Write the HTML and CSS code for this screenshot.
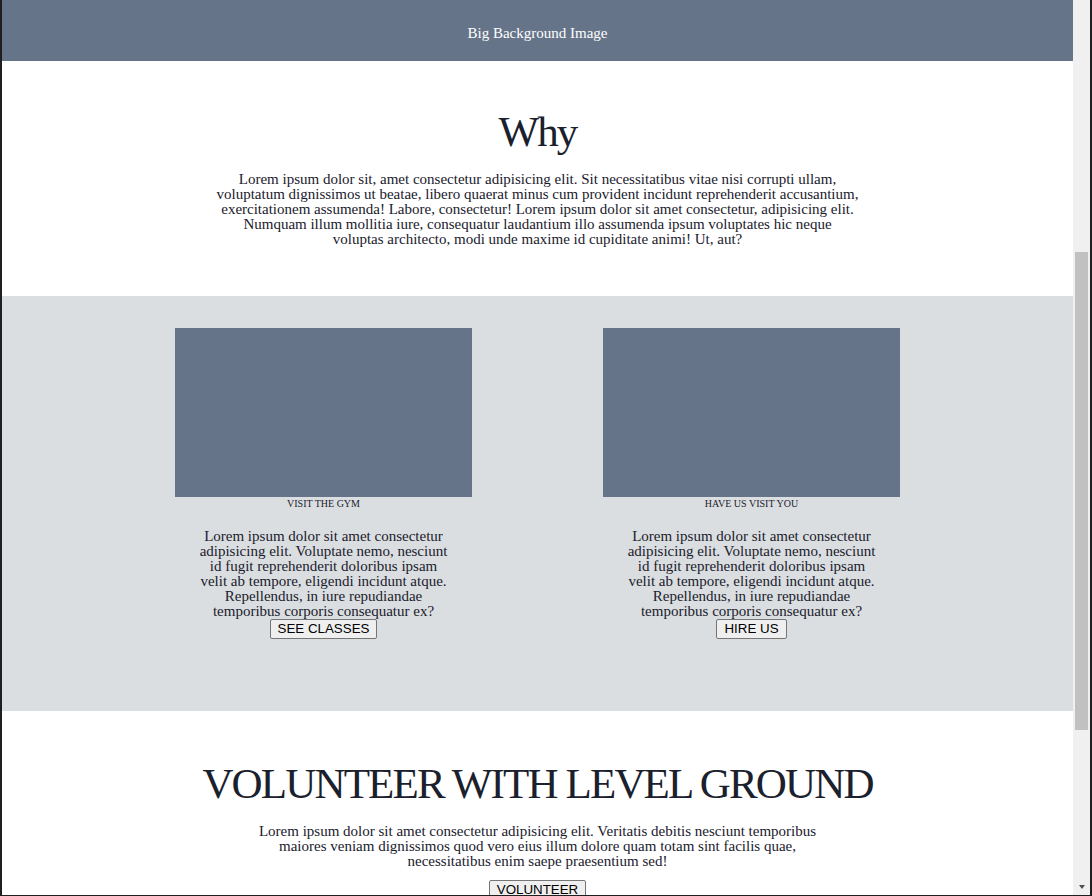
FILE: index.html
```html
<!DOCTYPE html>
<html lang="en">
<head>
<meta charset="utf-8">
<title>Level Ground</title>
<link rel="stylesheet" href="styles.css">
</head>
<body>
<div class="window">
  <div class="edge"></div>
  <div class="viewport">
    <header class="hero">Big Background Image</header>
    <section class="why">
      <h1 class="title">Why</h1>
      <p class="text why-text">Lorem ipsum dolor sit, amet consectetur adipisicing elit. Sit necessitatibus vitae nisi corrupti ullam, voluptatum dignissimos ut beatae, libero quaerat minus cum provident incidunt reprehenderit accusantium, exercitationem assumenda! Labore, consectetur! Lorem ipsum dolor sit amet consectetur, adipisicing elit. Numquam illum mollitia iure, consequatur laudantium illo assumenda ipsum voluptates hic neque voluptas architecto, modi unde maxime id cupiditate animi! Ut, aut?</p>
    </section>
    <section class="options">
      <div class="card">
        <div class="card-img"></div>
        <div class="caption">VISIT THE GYM</div>
        <p class="text card-text">Lorem ipsum dolor sit amet consectetur adipisicing elit. Voluptate nemo, nesciunt id fugit reprehenderit doloribus ipsam velit ab tempore, eligendi incidunt atque. Repellendus, in iure repudiandae temporibus corporis consequatur ex?</p>
        <button class="btn">SEE CLASSES</button>
      </div>
      <div class="card">
        <div class="card-img"></div>
        <div class="caption">HAVE US VISIT YOU</div>
        <p class="text card-text">Lorem ipsum dolor sit amet consectetur adipisicing elit. Voluptate nemo, nesciunt id fugit reprehenderit doloribus ipsam velit ab tempore, eligendi incidunt atque. Repellendus, in iure repudiandae temporibus corporis consequatur ex?</p>
        <button class="btn">HIRE US</button>
      </div>
    </section>
    <section class="volunteer">
      <h1 class="title">VOLUNTEER WITH LEVEL GROUND</h1>
      <p class="text vol-text">Lorem ipsum dolor sit amet consectetur adipisicing elit. Veritatis debitis nesciunt temporibus maiores veniam dignissimos quod vero eius illum dolore quam totam sint facilis quae, necessitatibus enim saepe praesentium sed!</p>
      <button class="btn">VOLUNTEER</button>
    </section>
  </div>
  <div class="scrollbar">
    <div class="thumb"></div>
    <div class="arrow"></div>
  </div>
  <div class="edge"></div>
</div>
</body>
</html>
```

FILE: styles.css
```css
html, body {
  margin: 0;
  padding: 0;
  background: #1f1f1f;
}

.window {
  display: flex;
  height: 895px;
  width: 1092px;
}

.edge {
  width: 2px;
  flex: none;
  background: #1f1f1f;
}

.viewport {
  width: 1071px;
  flex: none;
  overflow: hidden;
  background: #ffffff;
  font-family: "Liberation Serif", "Times New Roman", serif;
  color: #1a202c;
}

.hero {
  height: 61px;
  background: #667489;
  color: #ffffff;
  font-size: 15px;
  display: flex;
  align-items: center;
  justify-content: center;
  padding-top: 5px;
  box-sizing: border-box;
}

.why {
  padding: 43px 0 49px;
  text-align: center;
}

.title {
  margin: 0;
  font-size: 43px;
  font-weight: normal;
  line-height: 55px;
  letter-spacing: -1.85px;
}

.text {
  font-size: 15px;
  line-height: 15px;
  margin: 0 auto;
}

.why-text {
  max-width: 642px;
  margin-top: 13px;
}

.options {
  background: #dadee1;
  display: flex;
  justify-content: center;
  gap: 131px;
  padding: 32px 0 72px;
}

.card {
  width: 297px;
  display: flex;
  flex-direction: column;
  align-items: center;
  text-align: center;
}

.card-img {
  width: 297px;
  height: 169px;
  background: #667489;
}

.caption {
  font-size: 10px;
  line-height: 12px;
  margin-top: 1px;
}

.card-text {
  width: 256px;
  margin-top: 19px;
}

.btn {
  font-family: "Liberation Sans", Arial, sans-serif;
  font-size: 13.333px;
  line-height: 15px;
  color: #000000;
  background: #efefef;
  border: 1px solid #767676;
  border-radius: 2px;
  padding: 1px 7px 2px;
  margin: 0;
}

.volunteer {
  padding-top: 45px;
  text-align: center;
}

.vol-text {
  max-width: 580px;
  margin-top: 13px;
  margin-bottom: 11px;
}

.scrollbar {
  width: 17px;
  flex: none;
  background: #f0f0f0;
  display: flex;
  flex-direction: column;
  align-items: center;
}

.thumb {
  width: 13px;
  height: 478px;
  margin-top: 252px;
  background: #c1c1c1;
}

.arrow {
  margin-top: auto;
  margin-bottom: 6px;
  width: 0;
  height: 0;
  border-left: 3.5px solid transparent;
  border-right: 3.5px solid transparent;
  border-top: 4px solid #505050;
}
```
